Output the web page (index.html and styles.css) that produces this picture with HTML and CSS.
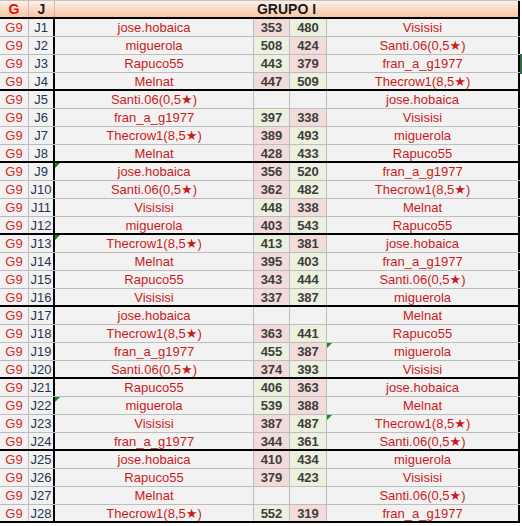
FILE: index.html
```html
<!DOCTYPE html>
<html>
<head>
<meta charset="utf-8">
<link rel="stylesheet" href="styles.css">
</head>
<body>
<div class="sheet">
  <div class="row head">
    <div class="c g">G</div>
    <div class="c j">J</div>
    <div class="c title">GRUPO I</div>
  </div>
  <div class="row"><div class="c g">G9</div><div class="c j">J1</div><div class="c n">jose.hobaica</div><div class="c s lo">353</div><div class="c s2 hi">480</div><div class="c n2">Visisisi</div></div>
  <div class="row"><div class="c g">G9</div><div class="c j">J2</div><div class="c n">miguerola</div><div class="c s hi">508</div><div class="c s2 lo">424</div><div class="c n2">Santi.06(0,5★)</div></div>
  <div class="row"><div class="c g">G9</div><div class="c j">J3</div><div class="c n">Rapuco55</div><div class="c s hi">443</div><div class="c s2 lo">379</div><div class="c n2">fran_a_g1977</div></div>
  <div class="row end"><div class="c g">G9</div><div class="c j">J4</div><div class="c n">Melnat</div><div class="c s lo">447</div><div class="c s2 hi">509</div><div class="c n2">Thecrow1(8,5★)</div></div>
  <div class="row"><div class="c g">G9</div><div class="c j">J5</div><div class="c n">Santi.06(0,5★)</div><div class="c s"></div><div class="c s2"></div><div class="c n2">jose.hobaica</div></div>
  <div class="row"><div class="c g">G9</div><div class="c j">J6</div><div class="c n">fran_a_g1977</div><div class="c s hi">397</div><div class="c s2 lo">338</div><div class="c n2">Visisisi</div></div>
  <div class="row"><div class="c g">G9</div><div class="c j">J7</div><div class="c n">Thecrow1(8,5★)</div><div class="c s lo">389</div><div class="c s2 hi">493</div><div class="c n2">miguerola</div></div>
  <div class="row end"><div class="c g">G9</div><div class="c j">J8</div><div class="c n">Melnat</div><div class="c s lo">428</div><div class="c s2 hi">433</div><div class="c n2">Rapuco55</div></div>
  <div class="row"><div class="c g">G9</div><div class="c j">J9</div><div class="c n"><span class="note"></span>jose.hobaica</div><div class="c s lo">356</div><div class="c s2 hi">520</div><div class="c n2">fran_a_g1977</div></div>
  <div class="row"><div class="c g">G9</div><div class="c j">J10</div><div class="c n">Santi.06(0,5★)</div><div class="c s lo">362</div><div class="c s2 hi">482</div><div class="c n2">Thecrow1(8,5★)</div></div>
  <div class="row"><div class="c g">G9</div><div class="c j">J11</div><div class="c n">Visisisi</div><div class="c s hi">448</div><div class="c s2 lo">338</div><div class="c n2">Melnat</div></div>
  <div class="row end"><div class="c g">G9</div><div class="c j">J12</div><div class="c n">miguerola</div><div class="c s lo">403</div><div class="c s2 hi">543</div><div class="c n2">Rapuco55</div></div>
  <div class="row"><div class="c g">G9</div><div class="c j">J13</div><div class="c n"><span class="note"></span>Thecrow1(8,5★)</div><div class="c s hi">413</div><div class="c s2 lo">381</div><div class="c n2">jose.hobaica</div></div>
  <div class="row"><div class="c g">G9</div><div class="c j">J14</div><div class="c n">Melnat</div><div class="c s lo">395</div><div class="c s2 hi">403</div><div class="c n2">fran_a_g1977</div></div>
  <div class="row"><div class="c g">G9</div><div class="c j">J15</div><div class="c n">Rapuco55</div><div class="c s lo">343</div><div class="c s2 hi">444</div><div class="c n2">Santi.06(0,5★)</div></div>
  <div class="row end"><div class="c g">G9</div><div class="c j">J16</div><div class="c n">Visisisi</div><div class="c s lo">337</div><div class="c s2 hi">387</div><div class="c n2">miguerola</div></div>
  <div class="row"><div class="c g">G9</div><div class="c j">J17</div><div class="c n">jose.hobaica</div><div class="c s"></div><div class="c s2"></div><div class="c n2">Melnat</div></div>
  <div class="row"><div class="c g">G9</div><div class="c j">J18</div><div class="c n">Thecrow1(8,5★)</div><div class="c s lo">363</div><div class="c s2 hi">441</div><div class="c n2">Rapuco55</div></div>
  <div class="row"><div class="c g">G9</div><div class="c j">J19</div><div class="c n">fran_a_g1977</div><div class="c s hi">455</div><div class="c s2 lo">387</div><div class="c n2"><span class="note"></span>miguerola</div></div>
  <div class="row end"><div class="c g">G9</div><div class="c j">J20</div><div class="c n">Santi.06(0,5★)</div><div class="c s lo">374</div><div class="c s2 hi">393</div><div class="c n2">Visisisi</div></div>
  <div class="row"><div class="c g">G9</div><div class="c j">J21</div><div class="c n">Rapuco55</div><div class="c s hi">406</div><div class="c s2 lo">363</div><div class="c n2">jose.hobaica</div></div>
  <div class="row"><div class="c g">G9</div><div class="c j">J22</div><div class="c n"><span class="note"></span>miguerola</div><div class="c s hi">539</div><div class="c s2 lo">388</div><div class="c n2">Melnat</div></div>
  <div class="row"><div class="c g">G9</div><div class="c j">J23</div><div class="c n">Visisisi</div><div class="c s lo">387</div><div class="c s2 hi">487</div><div class="c n2"><span class="note"></span>Thecrow1(8,5★)</div></div>
  <div class="row end"><div class="c g">G9</div><div class="c j">J24</div><div class="c n">fran_a_g1977</div><div class="c s lo">344</div><div class="c s2 hi">361</div><div class="c n2">Santi.06(0,5★)</div></div>
  <div class="row"><div class="c g">G9</div><div class="c j">J25</div><div class="c n">jose.hobaica</div><div class="c s lo">410</div><div class="c s2 hi">434</div><div class="c n2">miguerola</div></div>
  <div class="row"><div class="c g">G9</div><div class="c j">J26</div><div class="c n">Rapuco55</div><div class="c s lo">379</div><div class="c s2 hi">423</div><div class="c n2">Visisisi</div></div>
  <div class="row"><div class="c g">G9</div><div class="c j">J27</div><div class="c n">Melnat</div><div class="c s"></div><div class="c s2"></div><div class="c n2">Santi.06(0,5★)</div></div>
  <div class="row end"><div class="c g">G9</div><div class="c j">J28</div><div class="c n">Thecrow1(8,5★)</div><div class="c s hi">552</div><div class="c s2 lo">319</div><div class="c n2">fran_a_g1977</div></div>
  <div class="sel"></div>
</div>
</body>
</html>
```

FILE: styles.css
```css
* { box-sizing: border-box; }
html, body { margin: 0; padding: 0; background: #ffffff; }
body {
  font-family: "Liberation Sans", Arial, "DejaVu Sans", sans-serif;
  font-size: 13px;
}
.sheet {
  position: relative;
  width: 522px;
}
.row {
  display: grid;
  grid-template-columns: 29px 26px 199px 36px 37px 193px;
  height: 18px;
  border-bottom: 1px solid #bcbcbc;
  width: 520px;
}
.row.end { border-bottom: 2px solid #000; }
.c {
  position: relative;
  background: #f2f2f2;
  border-right: 1px solid #bcbcbc;
  text-align: center;
  line-height: 18px;
  white-space: nowrap;
  overflow: hidden;
}
.c.j { border-right: 2px solid #000; color: #24344f; }
.c.g { color: #d8261a; }
.c.n, .c.n2 { color: #c91b1b; }
.c.n2 { border-right: 2px solid #000; }
.c.s, .c.s2 { color: #3d3d3d; font-weight: bold; }
.c.hi { background: #ebf1de; }
.c.lo { background: #f2dcdb; }

.row.head {
  height: 19px;
  border-top: 1px solid #c4c4c4;
  border-bottom: 2px solid #000;
  grid-template-columns: 29px 26px 465px;
}
.head .c {
  background: linear-gradient(#fdf0e8, #f7c6a3);
  font-weight: bold;
  font-size: 14px;
  line-height: 17px;
}
.head .c.g { color: #e01010; }
.head .c.j { border-right: 1px solid #bcbcbc; color: #1e1e2e; }
.head .c.title { color: #1a1a24; border-right: 2px solid #000; }

.note {
  position: absolute;
  left: 0;
  top: 0;
  width: 0;
  height: 0;
  border-top: 5px solid #178a17;
  border-right: 5px solid transparent;
}
.sel {
  position: absolute;
  left: 520px;
  top: 54px;
  width: 2px;
  height: 20px;
  background: #217346;
}
```
